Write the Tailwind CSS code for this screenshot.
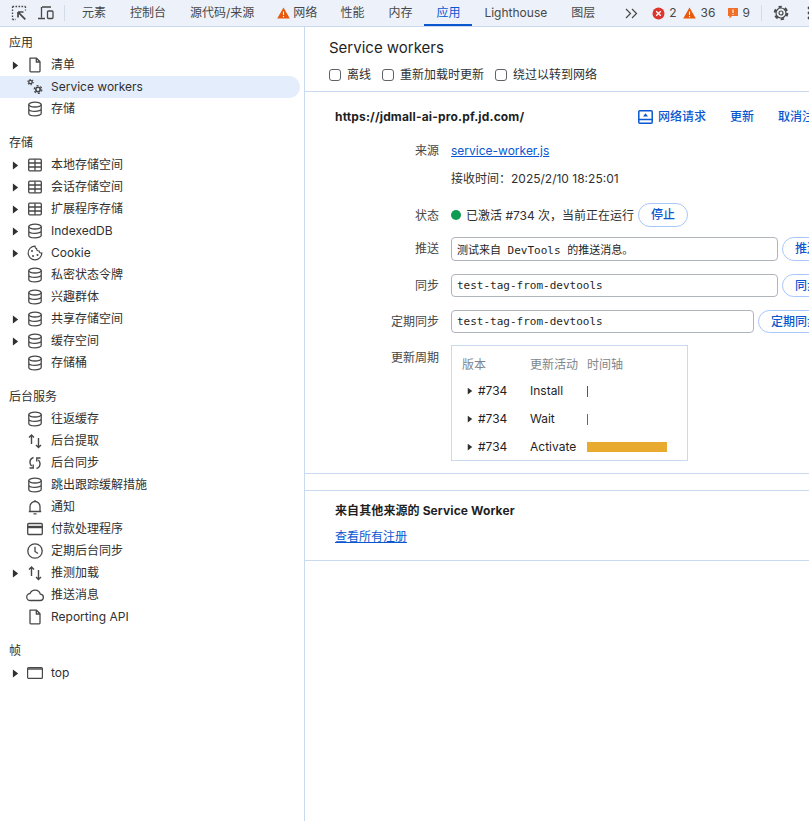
<!DOCTYPE html>
<html lang="zh-CN">
<head>
    <meta charset="UTF-8">
    <title>DevTools - Application</title>
    <script src="https://cdn.jsdelivr.net/npm/@tailwindcss/browser@4"></script>
</head>
<body class="h-screen overflow-hidden flex flex-col bg-white text-[12px] leading-[22px] text-[#1f1f1f] font-['Inter','Noto_Sans_CJK_SC',sans-serif]">

    <!-- Shared icons -->
    <svg class="hidden">
        <symbol id="arrow" viewBox="0 0 8 10"><path d="M1 0.5 7 5 1 9.5z" fill="#303030"/></symbol>
        <symbol id="db" viewBox="0 0 16 16"><g fill="none" stroke="#474747" stroke-width="1.3"><ellipse cx="8" cy="3.6" rx="6.2" ry="2.4"/><path d="M1.8 3.6v8.8c0 1.3 2.8 2.4 6.2 2.4s6.2-1.1 6.2-2.4V3.6M1.8 8c0 1.3 2.8 2.4 6.2 2.4s6.2-1.1 6.2-2.4"/></g></symbol>
        <symbol id="table" viewBox="0 0 16 16"><g fill="none" stroke="#474747" stroke-width="1.3"><rect x="1.7" y="2.2" width="12.6" height="11.6" rx="1"/><path d="M1.7 6h12.6M1.7 10h12.6M8 2.2v11.6"/></g></symbol>
        <symbol id="file" viewBox="0 0 16 16"><path d="M3 1.2h6.5L13 4.8v9.2a.8.8 0 0 1-.8.8H3.8a.8.8 0 0 1-.8-.8zM9.3 1.2v3.8H13" fill="none" stroke="#474747" stroke-width="1.3" stroke-linejoin="round"/></symbol>
        <symbol id="updown" viewBox="0 0 16 16"><path d="M4.500 11V2M2 4.500 4.500 2 7 4.500M11.500 5v9.500M9 12l2.500 2.500L14 12" fill="none" stroke="#474747" stroke-width="1.4"/></symbol>
    </svg>

    <!-- Top tab bar -->
    <div class="h-[27px] shrink-0 flex items-center bg-[#edf2fa] border-b border-[#c9d9ef] text-[#474747] overflow-hidden">
        <div class="w-[35px] shrink-0 flex justify-center pl-[3px]">
            <svg width="16" height="16" viewBox="0 0 16 16" fill="none" stroke="#474747" stroke-width="1.300"><path d="M1.500 1.500h13M1.500 1.500v13M1.500 14.500h3.500M14.500 1.500v4" stroke-dasharray="1.600 1.400"/><path d="M7 7h5.500M7 7v5.500M7.300 7.300l7 7" stroke-width="1.700"/></svg>
        </div>
        <div class="w-[21px] shrink-0 flex justify-center">
            <svg width="18" height="16" viewBox="0 0 18 16" fill="none" stroke="#474747" stroke-width="1.300"><path d="M5 2h9M4.500 2v10.500M1 13.500h7"/><rect x="10.500" y="6" width="5.500" height="7.500" rx="1"/></svg>
        </div>
        <div class="ml-[8px] mr-[5px] w-px h-[16px] bg-[#d3dbe7] shrink-0"></div>
        <div class="flex shrink-0 items-center h-full">
            <div class="h-full px-3 flex items-center">元素</div>
            <div class="h-full px-3 flex items-center">控制台</div>
            <div class="h-full px-3 flex items-center">源代码/来源</div>
            <div class="h-full px-[11px] flex items-center gap-[3px]">
                <svg width="13" height="12" viewBox="0 0 13 12"><path d="M6.500 0.500 12.800 11.500H0.200z" fill="#e8590c"/><path d="M6.500 4.500v3.500M6.500 9v1.200" stroke="#fff" stroke-width="1.100"/></svg>
                <span>网络</span>
            </div>
            <div class="h-full px-3 flex items-center">性能</div>
            <div class="h-full px-3 flex items-center">内存</div>
            <div class="h-full px-3 flex items-center text-[#0b57d0] border-b-2 border-[#0b57d0] pt-[2px]">应用</div>
            <div class="h-full px-3 flex items-center">Lighthouse</div>
            <div class="h-full px-3 flex items-center">图层</div>
        </div>
        <svg class="ml-[18px] shrink-0" width="13" height="11" viewBox="0 0 13 11" fill="none" stroke="#474747" stroke-width="1.200"><path d="M1 1l4.500 4.500L1 10M7 1l4.500 4.500L7 10"/></svg>
        <div class="ml-[14px] flex items-center shrink-0">
            <svg width="13" height="13" viewBox="0 0 13 13"><circle cx="6.500" cy="6.500" r="6" fill="#dc362e"/><path d="M4.200 4.200l4.600 4.600M8.800 4.200l-4.600 4.600" stroke="#fff" stroke-width="1.300"/></svg>
            <span class="ml-[4px]">2</span>
            <svg class="ml-[6px]" width="13" height="12" viewBox="0 0 13 12"><path d="M6.500 0.500 12.800 11.500H0.200z" fill="#e8590c"/><path d="M6.500 4.500v3.500M6.500 9v1.200" stroke="#fff" stroke-width="1.100"/></svg>
            <span class="ml-[5px]">36</span>
            <svg class="ml-[12px]" width="12" height="12" viewBox="0 0 12 12"><path d="M1 1h10v8H5l-2.500 2.500V9H1z" fill="#f0702a"/><path d="M6 2.500v3.500M6 7v1" stroke="#fff" stroke-width="1.100"/></svg>
            <span class="ml-[3px]">9</span>
        </div>
        <div class="ml-[11px] w-px h-[16px] bg-[#d3dbe7] shrink-0"></div>
        <svg class="ml-[11px] shrink-0" width="16" height="16" viewBox="0 0 16 16" fill="none" stroke="#474747"><circle cx="8" cy="8" r="5" stroke-width="1.200"/><circle cx="8" cy="8" r="6.300" stroke-width="2" stroke-dasharray="3.300 3.300"/><circle cx="8" cy="8" r="2" stroke-width="1.200"/></svg>
        <svg class="ml-[18px] shrink-0" width="4" height="14" viewBox="0 0 4 14" fill="#474747"><circle cx="2" cy="2" r="1.400"/><circle cx="2" cy="7" r="1.400"/><circle cx="2" cy="12" r="1.400"/></svg>
    </div>

    <div class="flex-1 flex min-h-0">
        <!-- Sidebar -->
        <aside class="w-[305px] shrink-0 border-r border-[#c9d9ef] pt-[5px] text-[#303030]">
            <div class="pl-[9px]">应用</div>
            <div class="flex items-center h-[22px]">
                <svg class="ml-[12px] w-[7px] h-[9px]"><use href="#arrow"/></svg>
                <svg class="ml-[8px] w-[16px] h-[16px]"><use href="#file"/></svg>
                <span class="ml-[8px]">清单</span>
            </div>
            <div class="flex items-center h-[22px] mr-[4px] bg-[#e4edfb] rounded-r-full">
                <svg class="ml-[27px] w-[16px] h-[16px]" viewBox="0 0 16 16" fill="none" stroke="#474747"><circle cx="3.500" cy="3" r="1.700" stroke-width="1.300"/><circle cx="3.500" cy="3" r="2.700" stroke-width="1.100" stroke-dasharray="1.400 1.430"/><circle cx="11" cy="10.500" r="2.200" stroke-width="1.600"/><circle cx="11" cy="10.500" r="3.800" stroke-width="1.300" stroke-dasharray="2 1.980"/></svg>
                <span class="ml-[8px]">Service workers</span>
            </div>
            <div class="flex items-center h-[22px]">
                <svg class="ml-[27px] w-[16px] h-[16px]"><use href="#db"/></svg>
                <span class="ml-[8px]">存储</span>
            </div>

            <div class="pl-[9px] mt-[12px]">存储</div>
            <div class="flex items-center h-[22px]">
                <svg class="ml-[12px] w-[7px] h-[9px]"><use href="#arrow"/></svg>
                <svg class="ml-[8px] w-[16px] h-[16px]"><use href="#table"/></svg>
                <span class="ml-[8px]">本地存储空间</span>
            </div>
            <div class="flex items-center h-[22px]">
                <svg class="ml-[12px] w-[7px] h-[9px]"><use href="#arrow"/></svg>
                <svg class="ml-[8px] w-[16px] h-[16px]"><use href="#table"/></svg>
                <span class="ml-[8px]">会话存储空间</span>
            </div>
            <div class="flex items-center h-[22px]">
                <svg class="ml-[12px] w-[7px] h-[9px]"><use href="#arrow"/></svg>
                <svg class="ml-[8px] w-[16px] h-[16px]"><use href="#table"/></svg>
                <span class="ml-[8px]">扩展程序存储</span>
            </div>
            <div class="flex items-center h-[22px]">
                <svg class="ml-[12px] w-[7px] h-[9px]"><use href="#arrow"/></svg>
                <svg class="ml-[8px] w-[16px] h-[16px]"><use href="#db"/></svg>
                <span class="ml-[8px]">IndexedDB</span>
            </div>
            <div class="flex items-center h-[22px]">
                <svg class="ml-[12px] w-[7px] h-[9px]"><use href="#arrow"/></svg>
                <svg class="ml-[8px] w-[16px] h-[16px]" viewBox="0 0 16 16"><path d="M8 1.200a6.800 6.800 0 1 0 6.800 6.800c-1.500.2-2.600-.6-2.800-2-1.400.1-2.400-.9-2.400-2.300C8.500 3.500 7.900 2.500 8 1.200z" fill="none" stroke="#474747" stroke-width="1.200"/><g fill="#474747"><circle cx="5" cy="6" r="1"/><circle cx="6" cy="11" r="1"/><circle cx="10.500" cy="10" r="1"/></g></svg>
                <span class="ml-[8px]">Cookie</span>
            </div>
            <div class="flex items-center h-[22px]">
                <svg class="ml-[27px] w-[16px] h-[16px]"><use href="#db"/></svg>
                <span class="ml-[8px]">私密状态令牌</span>
            </div>
            <div class="flex items-center h-[22px]">
                <svg class="ml-[27px] w-[16px] h-[16px]"><use href="#db"/></svg>
                <span class="ml-[8px]">兴趣群体</span>
            </div>
            <div class="flex items-center h-[22px]">
                <svg class="ml-[12px] w-[7px] h-[9px]"><use href="#arrow"/></svg>
                <svg class="ml-[8px] w-[16px] h-[16px]"><use href="#db"/></svg>
                <span class="ml-[8px]">共享存储空间</span>
            </div>
            <div class="flex items-center h-[22px]">
                <svg class="ml-[12px] w-[7px] h-[9px]"><use href="#arrow"/></svg>
                <svg class="ml-[8px] w-[16px] h-[16px]"><use href="#db"/></svg>
                <span class="ml-[8px]">缓存空间</span>
            </div>
            <div class="flex items-center h-[22px]">
                <svg class="ml-[27px] w-[16px] h-[16px]"><use href="#db"/></svg>
                <span class="ml-[8px]">存储桶</span>
            </div>

            <div class="pl-[9px] mt-[12px]">后台服务</div>
            <div class="flex items-center h-[22px]">
                <svg class="ml-[27px] w-[16px] h-[16px]"><use href="#db"/></svg>
                <span class="ml-[8px]">往返缓存</span>
            </div>
            <div class="flex items-center h-[22px]">
                <svg class="ml-[27px] w-[16px] h-[16px]"><use href="#updown"/></svg>
                <span class="ml-[8px]">后台提取</span>
            </div>
            <div class="flex items-center h-[22px]">
                <svg class="ml-[27px] w-[16px] h-[16px]" viewBox="0 0 16 16" fill="none" stroke="#474747" stroke-width="1.400"><path d="M6.500 2.500C4 3.300 2.800 5.500 3 7.800c.1 1.300.7 2.400 1.700 3.200M2.500 13h3.700V9.500M9.500 13.500c2.500-.8 3.700-3 3.500-5.300-.1-1.300-.7-2.400-1.700-3.200M13.500 3H9.800v3.500"/></svg>
                <span class="ml-[8px]">后台同步</span>
            </div>
            <div class="flex items-center h-[22px]">
                <svg class="ml-[27px] w-[16px] h-[16px]"><use href="#db"/></svg>
                <span class="ml-[8px]">跳出跟踪缓解措施</span>
            </div>
            <div class="flex items-center h-[22px]">
                <svg class="ml-[27px] w-[16px] h-[16px]" viewBox="0 0 16 16" fill="none" stroke="#474747" stroke-width="1.300"><path d="M3 12.500V7.500a5 5 0 0 1 10 0v5M1.800 12.500h12.400M8 1v1.500M6.500 14.800h3"/></svg>
                <span class="ml-[8px]">通知</span>
            </div>
            <div class="flex items-center h-[22px]">
                <svg class="ml-[27px] w-[16px] h-[16px]" viewBox="0 0 16 16" fill="none" stroke="#474747"><rect x=".7" y="2.500" width="14.600" height="11" rx="1" stroke-width="1.300"/><path d="M.7 6h14.600" stroke-width="2.400"/></svg>
                <span class="ml-[8px]">付款处理程序</span>
            </div>
            <div class="flex items-center h-[22px]">
                <svg class="ml-[27px] w-[16px] h-[16px]" viewBox="0 0 16 16" fill="none" stroke="#474747" stroke-width="1.300"><circle cx="8" cy="8" r="7.200"/><path d="M8 3.800V8.500l3 2"/></svg>
                <span class="ml-[8px]">定期后台同步</span>
            </div>
            <div class="flex items-center h-[22px]">
                <svg class="ml-[12px] w-[7px] h-[9px]"><use href="#arrow"/></svg>
                <svg class="ml-[8px] w-[16px] h-[16px]"><use href="#updown"/></svg>
                <span class="ml-[8px]">推测加载</span>
            </div>
            <div class="flex items-center h-[22px]">
                <svg class="ml-[26px] w-[18px] h-[16px]" viewBox="0 0 18 16" fill="none" stroke="#474747" stroke-width="1.300"><path d="M4.500 13.500a3.500 3.500 0 0 1-.5-7 5.500 5.500 0 0 1 10.300.6 3.200 3.200 0 0 1-.3 6.400z"/></svg>
                <span class="ml-[7px]">推送消息</span>
            </div>
            <div class="flex items-center h-[22px]">
                <svg class="ml-[27px] w-[16px] h-[16px]"><use href="#file"/></svg>
                <span class="ml-[8px]">Reporting API</span>
            </div>

            <div class="pl-[9px] mt-[12px]">帧</div>
            <div class="flex items-center h-[22px]">
                <svg class="ml-[12px] w-[7px] h-[9px]"><use href="#arrow"/></svg>
                <svg class="ml-[7px] w-[18px] h-[16px]" viewBox="0 0 18 16" fill="none" stroke="#474747"><rect x="1.600" y="2.600" width="14.800" height="10.800" rx="1" stroke-width="1.200"/><path d="M1.600 4h14.800" stroke-width="1.400"/></svg>
                <span class="ml-[7px]">top</span>
            </div>
        </aside>

        <!-- Main panel -->
        <main class="flex-1 min-w-0 overflow-hidden">
            <div class="h-[65px] border-b border-[#c9d9ef] pl-[24px] pt-[9px]">
                <h1 class="text-[15px] leading-[24px]">Service workers</h1>
                <div class="flex items-center h-[20px] mt-[5px] text-[#303030]">
                    <input type="checkbox" class="w-[12px] h-[12px] appearance-none border border-[#5f6368] rounded-[3px]">
                    <span class="ml-[6px]">离线</span>
                    <input type="checkbox" class="ml-[11px] w-[12px] h-[12px] appearance-none border border-[#5f6368] rounded-[3px]">
                    <span class="ml-[6px]">重新加载时更新</span>
                    <input type="checkbox" class="ml-[11px] w-[12px] h-[12px] appearance-none border border-[#5f6368] rounded-[3px]">
                    <span class="ml-[6px]">绕过以转到网络</span>
                </div>
            </div>

            <section class="h-[382px] border-b border-[#c9d9ef] pt-[14px] w-[600px]">
                <div class="flex items-center h-[22px] pl-[30px]">
                    <span class="font-bold w-[303px] tracking-[0.16px]">https://jdmall-ai-pro.pf.jd.com/</span>
                    <svg width="15" height="14" viewBox="0 0 15 14" fill="none" stroke="#0b57d0" stroke-width="1.500"><rect x=".8" y=".8" width="13.400" height="12.400" rx="1"/><path d="M.8 9.500h13.400"/><path d="M7.500 3.200 10 6.500H5z" fill="#0b57d0" stroke="none"/></svg>
                    <span class="ml-[5px] font-medium text-[#0b57d0]">网络请求</span>
                    <span class="ml-[24px] font-medium text-[#0b57d0]">更新</span>
                    <span class="ml-[24px] font-medium text-[#0b57d0] whitespace-nowrap">取消注册</span>
                </div>

                <div class="mt-[12px] grid grid-cols-[134px_1fr] gap-x-[12px]">
                    <div class="text-right text-[#474747] h-[22px]">来源</div>
                    <a href="#" class="underline text-[#0b57d0] h-[22px]">service-worker.js</a>

                    <div class="h-[22px] mt-[6px]"></div>
                    <div class="h-[22px] mt-[6px] text-[#303030]">接收时间：2025/2/10 18:25:01</div>

                    <div class="text-right text-[#474747] h-[24px] mt-[13px] pt-[2px] flex items-center justify-end">状态</div>
                    <div class="h-[24px] mt-[13px] flex items-center text-[#303030]">
                        <span class="w-[10px] h-[10px] rounded-full bg-[#119b52]"></span>
                        <span class="ml-[5px] pt-[2px]">已激活 #734 次，当前正在运行</span>
                        <button class="ml-[4px] w-[50px] h-[24px] rounded-full border border-[#a8c7fa] text-[#0b57d0] font-medium">停止</button>
                    </div>

                    <div class="text-right text-[#474747] h-[24px] mt-[10px] flex items-center justify-end">推送</div>
                    <div class="h-[24px] mt-[10px] flex gap-[4px]">
                        <input value="测试来自 DevTools 的推送消息。" class="w-[327px] h-[24px] px-[5px] border border-[#b0b5bb] rounded-[4px] text-[11px] font-['DejaVu_Sans_Mono','Noto_Sans_CJK_SC',monospace]">
                        <button class="w-[50px] shrink-0 h-[24px] rounded-full border border-[#a8c7fa] text-[#0b57d0] font-medium">推送</button>
                    </div>

                    <div class="text-right text-[#474747] h-[23px] mt-[13px] flex items-center justify-end">同步</div>
                    <div class="h-[23px] mt-[13px] flex gap-[4px]">
                        <input value="test-tag-from-devtools" class="w-[327px] h-[23px] px-[5px] border border-[#b0b5bb] rounded-[4px] text-[11px] font-['DejaVu_Sans_Mono','Noto_Sans_CJK_SC',monospace]">
                        <button class="w-[50px] shrink-0 h-[23px] rounded-full border border-[#a8c7fa] text-[#0b57d0] font-medium">同步</button>
                    </div>

                    <div class="text-right text-[#474747] h-[23px] mt-[13px] flex items-center justify-end">定期同步</div>
                    <div class="h-[23px] mt-[13px] flex gap-[4px]">
                        <input value="test-tag-from-devtools" class="w-[303px] h-[23px] px-[5px] border border-[#b0b5bb] rounded-[4px] text-[11px] font-['DejaVu_Sans_Mono','Noto_Sans_CJK_SC',monospace]">
                        <button class="w-[74px] shrink-0 h-[23px] rounded-full border border-[#a8c7fa] text-[#0b57d0] font-medium">定期同步</button>
                    </div>

                    <div class="text-right text-[#474747] mt-[12px] pt-[2px] h-[24px]">更新周期</div>
                    <div class="mt-[12px] w-[237px] h-[116px] border border-[#c9d9ef] pt-[8px]">
                        <div class="grid grid-cols-[68px_57px_1fr] pl-[10px] text-[#80868b] h-[23px]">
                            <span>版本</span><span>更新活动</span><span>时间轴</span>
                        </div>
                        <div class="grid grid-cols-[68px_57px_1fr] pl-[10px] h-[28px] items-center">
                            <span class="flex items-center"><svg class="ml-[5px] w-[6px] h-[8px]"><use href="#arrow"/></svg><span class="ml-[5px]">#734</span></span>
                            <span>Install</span>
                            <span class="w-px h-[11px] bg-[#0b7285]"></span>
                        </div>
                        <div class="grid grid-cols-[68px_57px_1fr] pl-[10px] h-[28px] items-center">
                            <span class="flex items-center"><svg class="ml-[5px] w-[6px] h-[8px]"><use href="#arrow"/></svg><span class="ml-[5px]">#734</span></span>
                            <span>Wait</span>
                            <span class="w-px h-[11px] bg-[#9c3fb0]"></span>
                        </div>
                        <div class="grid grid-cols-[68px_57px_1fr] pl-[10px] h-[28px] items-center">
                            <span class="flex items-center"><svg class="ml-[5px] w-[6px] h-[8px]"><use href="#arrow"/></svg><span class="ml-[5px]">#734</span></span>
                            <span>Activate</span>
                            <span class="w-[80px] h-[10px] bg-[#e9ab2f]"></span>
                        </div>
                    </div>
                </div>
            </section>

            <div class="h-[16px]"></div>

            <section class="h-[71px] border-t border-b border-[#c9d9ef] pl-[30px] pt-[9px]">
                <div class="font-bold tracking-[0.1px]">来自其他来源的 Service Worker</div>
                <a href="#" class="block mt-[4px] underline text-[#0b57d0]">查看所有注册</a>
            </section>
        </main>
    </div>
</body>
</html>
